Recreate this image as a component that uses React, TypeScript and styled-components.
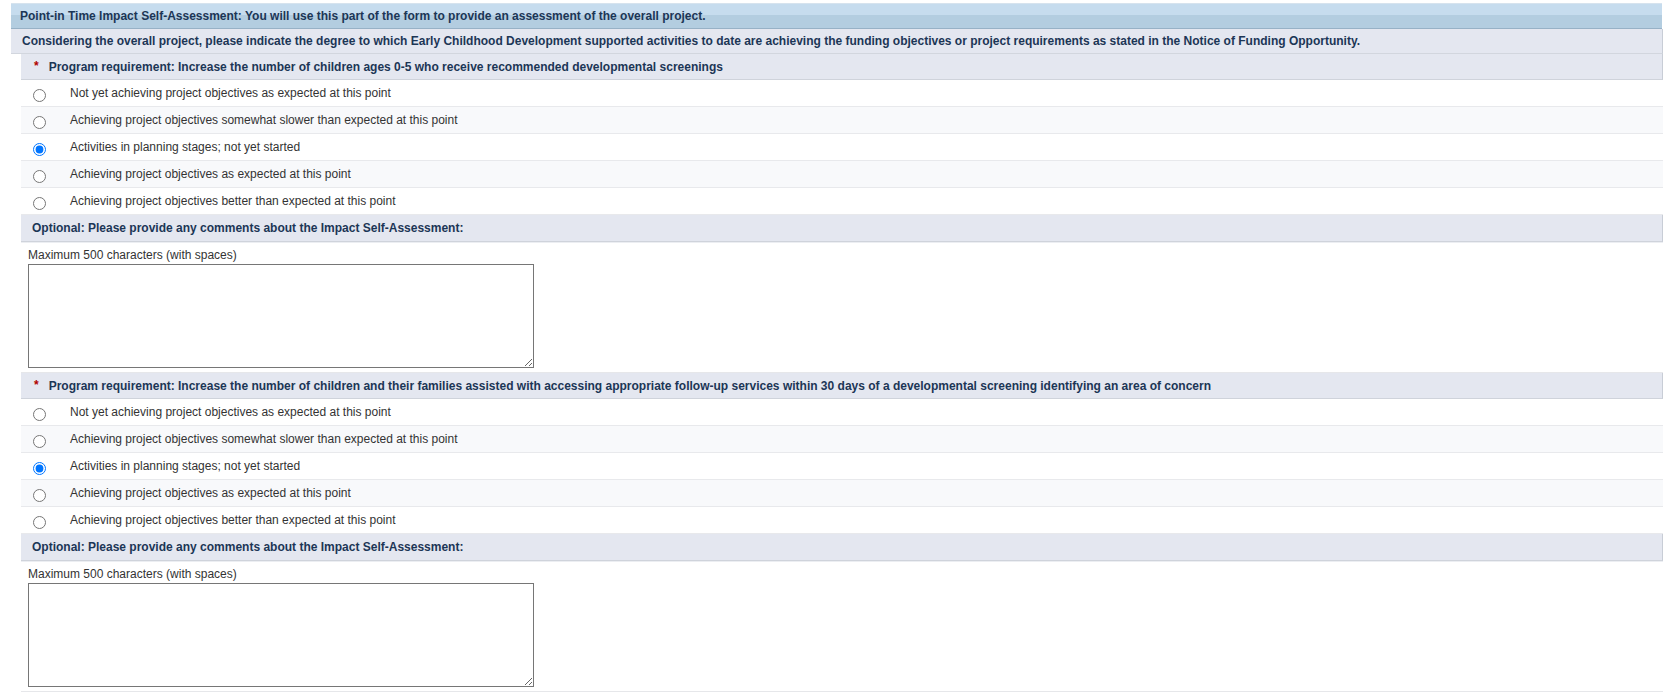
import React from "react";
import styled, { createGlobalStyle } from "styled-components";

const GlobalStyle = createGlobalStyle`
  html, body { margin: 0; padding: 0; background: #ffffff; }
  body { font-family: "Liberation Sans", Arial, sans-serif; font-size: 12px; color: #333333; }
  * { box-sizing: border-box; }
`;

const Page = styled.div`
  padding: 3px 3px 0 11px;
`;

const Panel = styled.div`
  display: flex;
  flex-direction: column;
`;

const TitleBar = styled.div`
  height: 26px;
  display: flex;
  align-items: center;
  padding-left: 9px;
  margin-right: 1px;
  background: linear-gradient(#c6dcee 0, #c6dcee 45%, #b3cde0 45%, #b3cde0 100%);
  border-top: 1px solid #d6e3ee;
  border-bottom: 1px solid #97b1c6;
  font-weight: bold;
  color: #1c3656;
`;

const IntroRow = styled.div`
  height: 25px;
  display: flex;
  align-items: center;
  padding-left: 11px;
  background: #e4e7f0;
  border-bottom: 1px solid #d2d6de;
  border-right: 1px solid #c8cdd6;
  font-weight: bold;
  color: #1c3656;
`;

const Requirements = styled.div`
  margin-left: 10px;
  display: flex;
  flex-direction: column;
`;

const Block = styled.section`
  display: flex;
  flex-direction: column;
`;

const SectionHeader = styled.div<{ $tall?: boolean }>`
  height: ${(p) => (p.$tall ? 27 : 26)}px;
  display: flex;
  align-items: center;
  padding-left: ${(p) => (p.$tall ? 11 : 13)}px;
  background: #e4e7f0;
  border-bottom: 1px solid #cfd3db;
  border-right: 1px solid #c8cdd6;
  box-shadow: 0 1px 0 #eceef2;
  font-weight: bold;
  color: #1c3656;
`;

const Star = styled.span`
  color: #b00000;
  font-weight: bold;
  font-size: 12px;
  margin-right: 10px;
  position: relative;
  top: -1px;
`;

const OptionList = styled.div`
  display: flex;
  flex-direction: column;
`;

const OptionRow = styled.label<{ $alt: boolean }>`
  height: 27px;
  display: flex;
  align-items: center;
  padding-left: 12px;
  background: ${(p) => (p.$alt ? "#f8f9fb" : "#ffffff")};
  border-bottom: 1px solid #e8e9ec;
  cursor: pointer;
`;

const Radio = styled.input`
  width: 13px;
  height: 13px;
  margin: 4px 24px 0 0;
  flex: none;
`;

const OptionText = styled.span`
  color: #333333;
`;

const Comments = styled.div`
  display: flex;
  flex-direction: column;
  align-items: flex-start;
  padding: 6px 0 4px 7px;
  border-bottom: 1px solid #e6e7ea;
`;

const HintLabel = styled.div`
  height: 15px;
  line-height: 15px;
  margin-bottom: 1px;
  color: #333333;
`;

const CommentBox = styled.textarea`
  width: 506px;
  height: 104px;
  border: 1px solid #767676;
  border-radius: 0;
  font-family: "Liberation Sans", Arial, sans-serif;
  font-size: 12px;
  resize: both;
`;

const options = [
  "Not yet achieving project objectives as expected at this point",
  "Achieving project objectives somewhat slower than expected at this point",
  "Activities in planning stages; not yet started",
  "Achieving project objectives as expected at this point",
  "Achieving project objectives better than expected at this point",
];

const requirements = [
  "Program requirement: Increase the number of children ages 0-5 who receive recommended developmental screenings",
  "Program requirement: Increase the number of children and their families assisted with accessing appropriate follow-up services within 30 days of a developmental screening identifying an area of concern",
];

export default function App() {
  return (
    <>
      <GlobalStyle />
      <Page>
        <Panel>
          <TitleBar>
            Point-in Time Impact Self-Assessment: You will use this part of the form to provide an assessment of the overall project.
          </TitleBar>
          <IntroRow>
            Considering the overall project, please indicate the degree to which Early Childhood Development supported activities to date are achieving the funding objectives or project requirements as stated in the Notice of Funding Opportunity.
          </IntroRow>
          <Requirements>
            {requirements.map((req, ri) => (
              <Block key={ri}>
                <SectionHeader>
                  <Star>*</Star>
                  {req}
                </SectionHeader>
                <OptionList>
                  {options.map((opt, oi) => (
                    <OptionRow key={oi} $alt={oi % 2 === 1}>
                      <Radio type="radio" name={`req-${ri}`} defaultChecked={oi === 2} />
                      <OptionText>{opt}</OptionText>
                    </OptionRow>
                  ))}
                </OptionList>
                <SectionHeader $tall>Optional: Please provide any comments about the Impact Self-Assessment:</SectionHeader>
                <Comments>
                  <HintLabel>Maximum 500 characters (with spaces)</HintLabel>
                  <CommentBox />
                </Comments>
              </Block>
            ))}
          </Requirements>
        </Panel>
      </Page>
    </>
  );
}
